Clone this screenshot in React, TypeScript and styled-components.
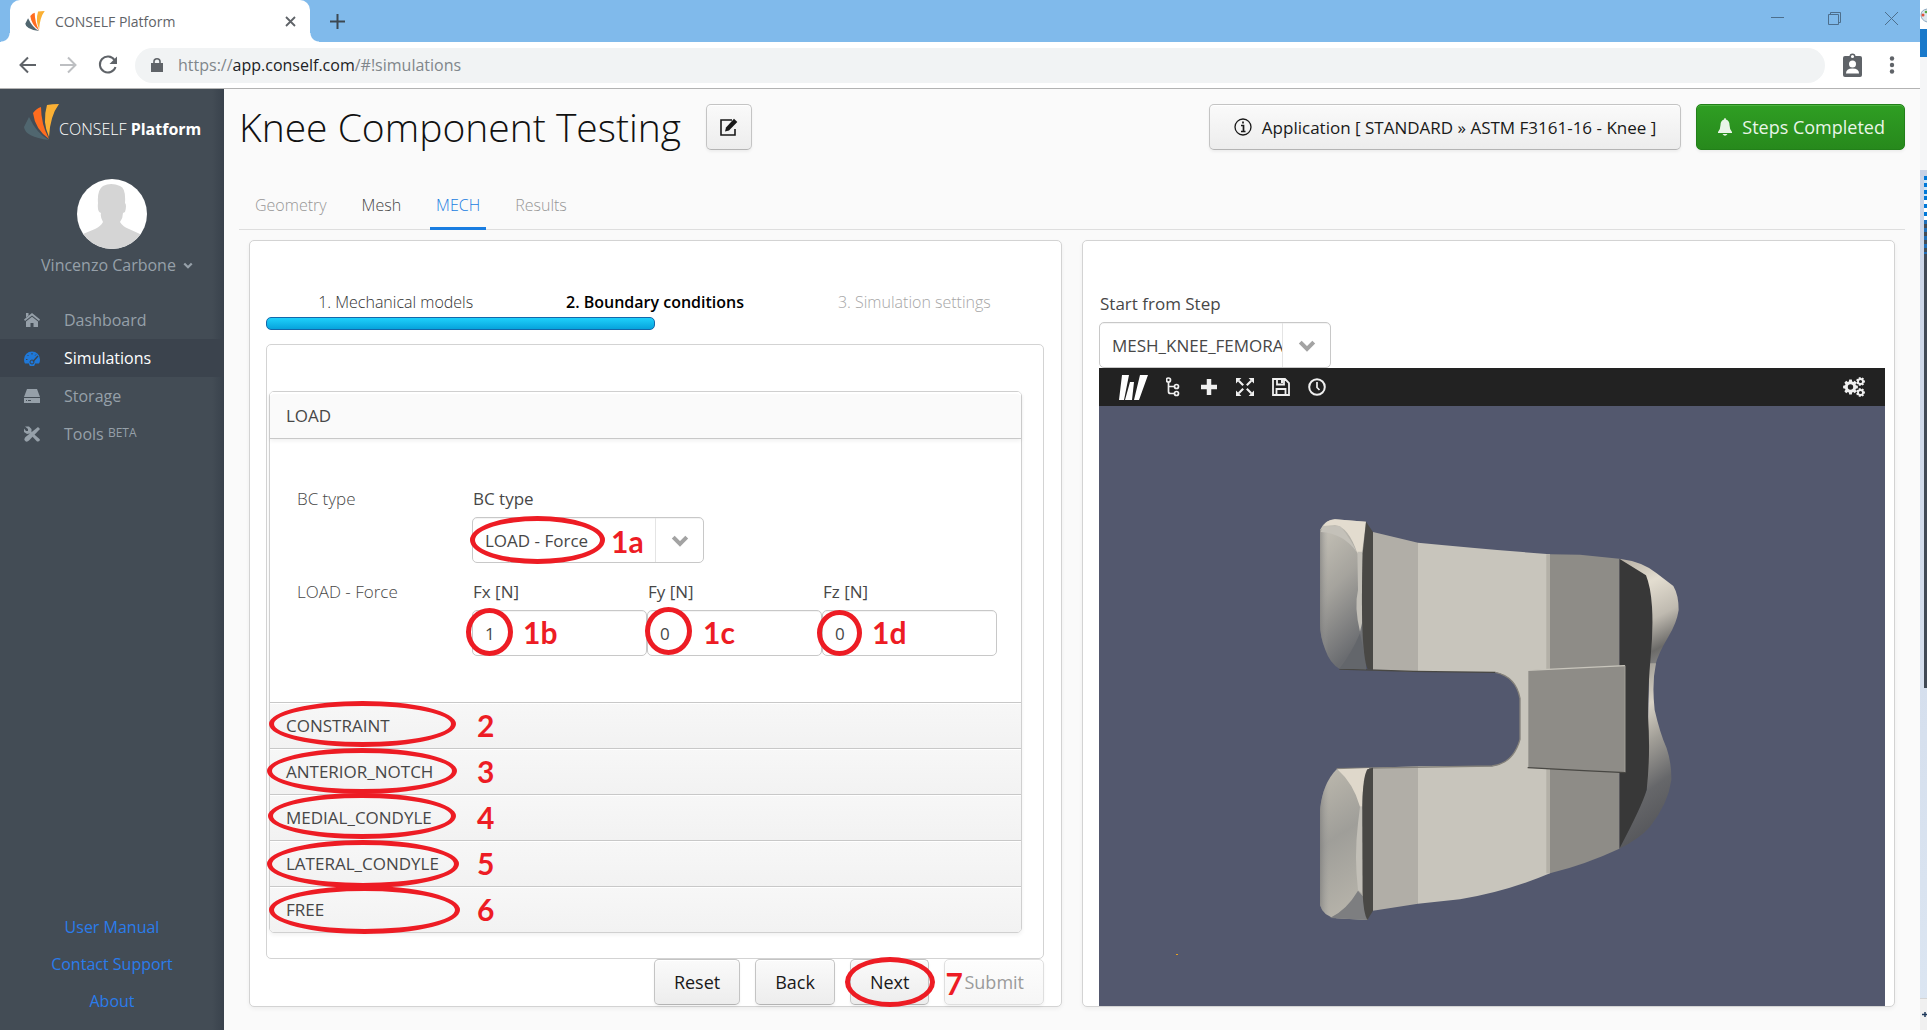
import React, { useState } from "react";
import styled, { createGlobalStyle, css } from "styled-components";

const sans = `"Open Sans", "Noto Sans", sans-serif`;
const red = "#ed1c24";

const GlobalStyle = createGlobalStyle`
  *, *::before, *::after { box-sizing: border-box; }
  body { margin: 0; background: #fafafa; font-family: ${sans}; font-size: 17px; color: #474747; }
  button, input, select { font-family: inherit; font-size: inherit; color: inherit; margin: 0; }
  h1, p, ul { margin: 0; padding: 0; font-weight: inherit; }
`;

/* ---------- window frame ---------- */
const Screen = styled.div`
  display: flex;
  min-height: 100vh;
`;
const Browser = styled.div`
  flex: 1;
  min-width: 0;
  display: flex;
  flex-direction: column;
`;
const TitleBar = styled.div`
  display: flex;
  height: 42px;
  padding-left: 10px;
  background: #80baeb;
`;
const BrowserTab = styled.div`
  position: relative;
  display: flex;
  align-items: center;
  width: 300px;
  padding: 0 14px 0 15px;
  border-radius: 10px 10px 0 0;
  background: #fff;
  font-size: 14px;
  color: #5f6368;
  &::before, &::after {
    content: "";
    position: absolute;
    bottom: 0;
    width: 9px;
    height: 9px;
  }
  &::before { right: 100%; background: radial-gradient(circle at 0 0, transparent 8px, #fff 9px); }
  &::after { left: 100%; background: radial-gradient(circle at 100% 0, transparent 8px, #fff 9px); }
`;
const TabTitle = styled.span`
  flex: 1;
  margin-left: 10px;
`;
const IconButton = styled.button`
  display: flex;
  align-items: center;
  justify-content: center;
  padding: 0;
  border: 0;
  background: none;
  svg { display: block; }
`;
const NewTab = styled(IconButton)`
  width: 34px;
  margin: 0 auto 0 10px;
`;
const WindowButton = styled(IconButton)`
  width: 57px;
  height: 37px;
`;
const AddressBar = styled.div`
  display: flex;
  align-items: center;
  height: 47px;
  padding: 0 18px;
  border-bottom: 1px solid #b3b3b3;
  background: #fff;
`;
const NavButtons = styled.div`
  display: flex;
  gap: 20px;
  width: 117px;
`;
const Omnibox = styled.div`
  display: flex;
  align-items: center;
  flex: 1;
  height: 35px;
  margin-right: 18px;
  padding-left: 16px;
  border-radius: 18px;
  background: #f1f3f4;
  font-size: 16px;
  color: #80868b;
`;
const Url = styled.span`
  margin-left: 15px;
  b { font-weight: 400; color: #202124; }
`;
const Body = styled.div`
  flex: 1;
  display: flex;
`;

/* ---------- sliver of the window behind ---------- */
const Backdrop = styled.div`
  display: flex;
  flex-direction: column;
  width: 7px;
  background: linear-gradient(#c7d1e4, #dce6f2);
  overflow: hidden;
`;
const Slice = styled.div<{ $h: number; $bg: string; $inset?: boolean }>`
  flex: none;
  height: ${(p) => p.$h}px;
  margin-left: ${(p) => (p.$inset ? 4 : 0)}px;
  background: ${(p) => p.$bg};
  svg { display: block; }
`;
const StatusSlice = styled.div`
  display: flex;
  align-items: center;
  height: 32px;
  margin-top: auto;
  border-top: 1px solid #d5d5d5;
  background: #f0f0f0;
`;

/* ---------- sidebar ---------- */
const Sidebar = styled.aside`
  display: flex;
  flex-direction: column;
  width: 224px;
  background: linear-gradient(to left, #39424c, transparent 12px), #434c55;
  font-size: 16px;
  color: #96a0a9;
`;
const Brand = styled.div`
  display: flex;
  height: 90px;
  padding: 15px 0 0 24px;
  color: #fff;
  font-weight: 300;
  span { padding-top: 13px; line-height: 24px; }
  b { font-weight: 700; }
`;
const Profile = styled.button`
  display: flex;
  flex-direction: column;
  align-items: center;
  gap: 4px;
  padding: 0;
  border: 0;
  background: none;
  line-height: 24px;
  span { display: flex; align-items: center; gap: 7px; padding-left: 10px; }
`;
const Menu = styled.nav`
  display: flex;
  flex-direction: column;
  margin-top: 24px;
`;
const MenuItem = styled.a<{ $active?: boolean }>`
  display: flex;
  align-items: center;
  gap: 24px;
  height: 38px;
  padding-left: 24px;
  color: inherit;
  text-decoration: none;
  ${(p) =>
    p.$active &&
    css`
      background: #3b434d;
      color: #fff;
      svg { color: #1f78d8; }
    `}
  sup { font-size: 12px; line-height: 1; vertical-align: 3px; }
`;
const HelpLinks = styled.div`
  display: flex;
  flex-direction: column;
  align-items: center;
  gap: 13px;
  margin-top: auto;
  padding-bottom: 17px;
  line-height: 24px;
  a { color: #2a7cec; text-decoration: none; }
`;

/* ---------- main area ---------- */
const Main = styled.main`
  flex: 1;
  min-width: 0;
  display: flex;
  flex-direction: column;
  padding: 15px 15px 23px;
`;
const Header = styled.header`
  display: flex;
  align-items: center;
  gap: 15px;
  height: 46px;
`;
const Title = styled.h1`
  margin-right: 10px;
  font-size: 39px;
  line-height: 46px;
  font-weight: 300;
  color: #111;
`;
const Button = styled.button<{ $kind?: "primary" }>`
  position: relative;
  display: flex;
  align-items: center;
  gap: 8px;
  height: 46px;
  padding: 0 19px;
  border: 1px solid #c4c4c4;
  border-bottom-color: #b4b4b4;
  border-radius: 5px;
  background: linear-gradient(#fafafa, #ededed);
  box-shadow: inset 0 1px 0 #fff, 0 2px 3px rgba(0, 0, 0, 0.05);
  font-size: 18px;
  color: #191919;
  white-space: nowrap;
  &:disabled { border-color: #dfdfdf; background: linear-gradient(#fdfdfd, #f6f6f6); color: #9b9b9b; }
  ${(p) =>
    p.$kind === "primary" &&
    css`
      border-color: #228019;
      background: linear-gradient(#2f9e23, #27891c);
      box-shadow: inset 0 1px 0 #4cb340, 0 2px 3px rgba(0, 0, 0, 0.05);
      color: #e9f5e8;
    `}
`;
const EditButton = styled(Button)`
  width: 46px;
  padding: 0;
  justify-content: center;
`;
const ApplicationButton = styled(Button)`
  margin-left: auto;
  padding: 0 24px;
  gap: 10px;
  font-size: 17px;
`;
const Tabs = styled.div`
  display: flex;
  gap: 23px;
  height: 49px;
  margin-top: 31px;
  padding-left: 10px;
  border-bottom: 1px solid #dedede;
`;
const Tab = styled.button<{ $state: "off" | "on" | "active" }>`
  height: 49px;
  padding: 2px 6px 0;
  border: 0;
  border-bottom: 3px solid ${(p) => (p.$state === "active" ? "#197de1" : "transparent")};
  background: none;
  font-size: 16px;
  font-weight: 300;
  color: ${(p) => ({ off: "#969696", on: "#464646", active: "#197de1" })[p.$state]};
`;
const Panels = styled.div`
  flex: 1;
  display: grid;
  grid-template-columns: 1fr 1fr;
  gap: 20px;
  margin-top: 10px;
  padding: 0 10px;
`;
const Panel = styled.section<{ $viewer?: boolean }>`
  display: flex;
  flex-direction: column;
  min-width: 0;
  padding: ${(p) => (p.$viewer ? "51px 9px 0 16px" : "49px 17px 0 16px")};
  border: 1px solid #d3d3d3;
  border-radius: 5px;
  background: #fff;
  box-shadow: 0 2px 4px rgba(0, 0, 0, 0.05);
`;

/* ---------- wizard ---------- */
const Steps = styled.ol`
  display: grid;
  grid-template-columns: repeat(3, 1fr);
  margin: 0;
  padding: 0;
  list-style: none;
  text-align: center;
  font-size: 16px;
  line-height: 24px;
`;
const Step = styled.li<{ $state: "done" | "current" | "next" }>`
  font-weight: ${(p) => (p.$state === "current" ? 600 : 300)};
  color: ${(p) => ({ done: "#333", current: "#000", next: "#a6a6a6" })[p.$state]};
`;
const Progress = styled.div`
  margin: 3px 0 14px;
`;
const ProgressFill = styled.div`
  width: 50%;
  height: 13px;
  border: 1px solid #1368ab;
  border-radius: 5px;
  background: linear-gradient(#1fd0fb, #07a3dc);
`;
const Frame = styled.div`
  padding: 46px 21px 25px 2px;
  border: 1px solid #d3d3d3;
  border-radius: 5px;
`;
const Accordion = styled.div`
  border: 1px solid #d0d0d0;
  border-radius: 5px;
  box-shadow: 0 2px 4px rgba(0, 0, 0, 0.06);
`;
const Fold = styled.button<{ $open?: boolean }>`
  position: relative;
  display: block;
  width: 100%;
  height: 46px;
  padding: 0 16px;
  border: 0;
  border-top: 1px solid #c8c8c8;
  background: linear-gradient(#f7f7f7, #f2f2f2);
  box-shadow: inset 0 1px 0 #fff;
  text-align: left;
  &:last-child { border-radius: 0 0 4px 4px; }
  ${(p) =>
    p.$open &&
    css`
      height: 47px;
      border-top: 0;
      border-bottom: 1px solid #c8c8c8;
      border-radius: 4px 4px 0 0;
      background: #fafafa;
      box-shadow: inset 0 2px 0 #fff, 0 2px 4px rgba(0, 0, 0, 0.06);
    `}
`;
const Form = styled.div`
  display: grid;
  row-gap: 17px;
  padding: 48px 24px 46px 27px;
`;
const FormRow = styled.div`
  display: grid;
  grid-template-columns: 175px 1fr;
  line-height: 24px;
`;
const RowName = styled.span`
  font-weight: 300;
`;
const Fields = styled.div`
  display: grid;
  grid-template-columns: repeat(3, 1fr);
`;
const Field = styled.div`
  position: relative;
  display: flex;
  flex-direction: column;
  gap: 6px;
  min-width: 0;
  line-height: 24px;
  label { padding-left: 1px; }
`;
const TextBox = styled.input`
  width: 100%;
  height: 46px;
  padding: 0 12px;
  border: 1px solid #c8c8c8;
  border-radius: 5px;
  background: #fff;
  box-shadow: inset 0 1px 0 #f4f4f4;
`;
const SelectBox = styled.div`
  position: relative;
  width: 232px;
  select {
    display: block;
    width: 100%;
    height: 46px;
    padding: 0 48px 0 12px;
    border: 1px solid #c8c8c8;
    border-radius: 5px;
    background: #fff;
    box-shadow: inset 0 1px 0 #f4f4f4;
    appearance: none;
  }
`;
const SelectArrow = styled.span`
  position: absolute;
  top: 1px;
  right: 1px;
  bottom: 1px;
  display: flex;
  align-items: center;
  justify-content: center;
  width: 48px;
  border-left: 1px solid #e4e4e4;
  color: #a3a3a3;
  pointer-events: none;
`;
const Actions = styled.div`
  display: flex;
  justify-content: flex-end;
  gap: 15px;
  padding-bottom: 1px;
`;

/* ---------- annotations drawn over the controls ---------- */
const Ring = styled.span<{ $x: number; $y: number; $w: number; $h: number }>`
  position: absolute;
  z-index: 2;
  left: ${(p) => p.$x}px;
  top: ${(p) => p.$y}px;
  width: ${(p) => p.$w}px;
  height: ${(p) => p.$h}px;
  border: 5px solid ${red};
  border-radius: 50%;
  pointer-events: none;
`;
const Note = styled.span<{ $x: number; $y: number }>`
  position: absolute;
  z-index: 2;
  left: ${(p) => p.$x}px;
  top: ${(p) => p.$y}px;
  font: 700 30px/32px Lato, "Open Sans", sans-serif;
  color: ${red};
  pointer-events: none;
`;

/* ---------- viewer ---------- */
const Viewer = styled.div`
  flex: 1;
  display: flex;
  flex-direction: column;
`;
const ViewerBar = styled.div`
  display: flex;
  align-items: center;
  gap: 18px;
  height: 38px;
  padding: 0 20px;
  background: #222;
  color: #f0f0f0;
  ${IconButton}:last-child { margin-left: auto; }
`;
const Canvas = styled.div`
  flex: 1;
  min-height: 600px;
  background: #53586e;
  svg { display: block; width: 100%; height: 100%; }
`;

/* ---------- drawings ---------- */
const Logo = ({ w, h }: { w: number; h: number }) => (
  <svg width={w} height={h} viewBox="0 0 35 36" aria-hidden="true">
    <path d="M5 13 L0 23 Q1 33 25 36 Q13 30 5 13Z" fill="#50666f" />
    <path d="M9 9 Q13 4 17 3 Q17 20 25 35 Q11 25 9 9Z" fill="#ff6c1f" />
    <path d="M23 1 Q28 0 35 0 Q26 12 25 33 Q18 18 23 1Z" fill="#fbb034" />
  </svg>
);
const Glyph = ({ w = 18, h = w, box = "0 0 18 18", children }: { w?: number; h?: number; box?: string; children: React.ReactNode }) => (
  <svg width={w} height={h} viewBox={box} fill="none" stroke="currentColor" strokeWidth="2" aria-hidden="true">
    {children}
  </svg>
);
const Chevron = ({ size }: { size: number }) => (
  <Glyph w={size} box="0 0 16 16">
    <path d="M2 5.5 L8 11.5 L14 5.5" strokeWidth="3.6" />
  </Glyph>
);
const Avatar = () => (
  <svg width="70" height="70" viewBox="0 0 70 70" aria-hidden="true">
    <clipPath id="face"><circle cx="35" cy="35" r="35" /></clipPath>
    <circle cx="35" cy="35" r="35" fill="#fff" />
    <path
      clipPath="url(#face)"
      fill="#d5d5d5"
      d="M21 24 Q20 11 26 7 Q34 3 43 7 Q49 9 48 24 Q50 26 48 33 L46 34 Q46 39 43 43 Q46 48 52 50 L63 55 L66 72 H4 L6 55 L18 50 Q24 47 26 43 Q23 38 24 34 Q20 33 21 24Z"
    />
  </svg>
);
const gearPath = (cx: number, cy: number, r: number, teeth: number) => {
  const pts: string[] = [];
  for (let i = 0; i < teeth; i++) {
    const a = (i / teeth) * Math.PI * 2;
    const s = Math.PI / teeth;
    [[-0.75, 0.76], [-0.45, 1], [0.45, 1], [0.75, 0.76]].forEach(([k, m]) =>
      pts.push(`${(cx + Math.cos(a + k * s) * r * m).toFixed(2)} ${(cy + Math.sin(a + k * s) * r * m).toFixed(2)}`)
    );
  }
  const q = r * 0.36;
  return `M${pts.join("L")}Z M${cx - q} ${cy}a${q} ${q} 0 1 0 ${2 * q} 0a${q} ${q} 0 1 0 ${-2 * q} 0Z`;
};

const KneeModel = () => (
  <svg viewBox="1099 406 786 600" role="img" aria-label="Knee component mesh">
    <defs>
      <linearGradient id="pad" x1="0" y1="0" x2="0.3" y2="1">
        <stop offset="0" stopColor="#c9c5ba" /><stop offset="0.5" stopColor="#a5a39d" /><stop offset="1" stopColor="#6a6c70" />
      </linearGradient>
      <linearGradient id="padLow" x1="0" y1="0" x2="0.2" y2="1">
        <stop offset="0" stopColor="#bdb9ae" /><stop offset="0.5" stopColor="#9f9e99" /><stop offset="1" stopColor="#b5b2a9" />
      </linearGradient>
      <linearGradient id="edge" x1="0" y1="0" x2="1" y2="0">
        <stop offset="0" stopColor="#777" stopOpacity="0.6" /><stop offset="0.3" stopColor="#999" stopOpacity="0" />
      </linearGradient>
      <linearGradient id="bumpTop" x1="0" y1="0" x2="0.25" y2="1">
        <stop offset="0" stopColor="#b5aea2" /><stop offset="0.3" stopColor="#e3ddd0" /><stop offset="0.6" stopColor="#bfbab0" /><stop offset="0.85" stopColor="#6b6a68" /><stop offset="1" stopColor="#888" />
      </linearGradient>
      <linearGradient id="bumpLow" x1="0.1" y1="0" x2="0.3" y2="1">
        <stop offset="0" stopColor="#8b8983" /><stop offset="0.3" stopColor="#d8d2c6" /><stop offset="0.5" stopColor="#a19e97" /><stop offset="0.75" stopColor="#66676a" /><stop offset="1" stopColor="#55565a" />
      </linearGradient>
    </defs>
    <g transform="translate(1280 490) scale(0.33333)">
      <path fill="url(#bumpTop)" d="M1018 206 Q1090 215 1130 250 L1180 288 Q1196 315 1196 360 Q1190 400 1165 440 Q1135 490 1126 525 L1105 570 L1100 300Z" />
      <path fill="url(#bumpLow)" d="M1108 520 L1128 520 Q1115 580 1124 660 Q1140 730 1160 775 Q1175 820 1174 870 Q1165 940 1110 1010 Q1080 1045 1018 1076 L1100 900Z" />
      <path fill="#383838" d="M1018 206 L1098 256 Q1112 290 1116 350 Q1120 420 1112 500 Q1103 600 1104 680 Q1112 790 1100 900 Q1085 950 1018 1076Z" />
      <path fill="#b1aea7" d="M279 126 L414 158 V545 L279 540Z M279 833 L414 829 V1241 L279 1262Z" />
      <path fill="#c8c5bc" d="M414 158 Q600 176 810 193 V1150 Q680 1205 540 1228 L414 1241 V829 H636 Q700 820 720 748 V625 Q708 560 646 546 H414Z" />
      <path fill="#8e8c87" d="M810 193 L900 194 L1018 206 V1076 Q920 1122 810 1150Z" />
      <path fill="#b3b0a7" d="M799 193h11V540h-11Z M799 836h11V1150h-11Z" />
      <path fill="#8e8c87" d="M743 541 L1035 526 V847 L743 833Z" />
      <path fill="none" stroke="#c8c5bc" strokeWidth="4" d="M743 833 V541 L1035 527" />
      <path fill="none" stroke="#a3a19a" strokeWidth="3" d="M1035 527 V847" />
      <path fill="none" stroke="#484743" strokeWidth="4" d="M743 833 L912 842 L1035 848 M178 537 L400 544 L646 547" />
      <path fill="none" stroke="#85827b" strokeWidth="4" d="M646 547 Q708 560 720 625 V748 Q700 820 636 828 L170 836" />
      <path fill="url(#pad)" d="M120 120 Q135 88 165 88 L258 95 V538 L178 536 Q150 520 136 480 Q120 440 120 400Z" />
      <path fill="url(#edge)" d="M120 120 Q150 100 200 150 V500 L178 536 Q120 480 120 400Z" />
      <path fill="#e3dccf" d="M165 88 L258 95 L246 190 H232 Q205 110 165 105 L130 108 Q140 90 165 88Z" />
      <path fill="#c4c1b9" d="M128 110 L180 108 Q215 150 230 186 Q190 130 122 126Z" />
      <path fill="#63666b" d="M240 430 L258 520 V538 L178 536 Q215 490 240 430Z" />
      <path fill="#c2bfb7" d="M232 185 H246 V400 L240 425 Q222 350 234 300Z" />
      <path fill="#494845" d="M258 95 L279 126 V540 L262 536 Q240 480 248 190Z" />
      <path fill="url(#padLow)" d="M120 960 Q128 880 170 838 L262 836 V1290 L170 1285 Q130 1280 120 1245Z" />
      <path fill="url(#edge)" d="M120 960 Q128 880 170 838 L210 900 V1210 L170 1285 Q130 1280 120 1245Z" />
      <path fill="#dfd8cb" d="M172 838 L268 834 Q246 880 246 950 H240 Q220 880 172 838Z" />
      <path fill="#7d7e80" d="M234 1202 L250 1220 L262 1290 L150 1284 Q200 1260 234 1202Z" />
      <path fill="#c2bfb7" d="M240 950 H246 V1210 L234 1200 Q222 1100 234 1000Z" />
      <path fill="#494845" d="M279 833 V1262 L262 1290 Q250 1270 248 1210 L247 950 Q248 860 262 838Z" />
    </g>
    <rect x="1176" y="954" width="2" height="1" fill="#e8a020" />
  </svg>
);

const menu = [
  {
    name: "Dashboard",
    icon: (
      <path d="M8 1 L16 7.5 L15 9 L8 3.5 L1 9 L0 7.5Z M2 1h2.5v2.5L2 5.5Z M8 4.8 L14 9.6 V15 H9.5 V11 H6.5 V15 H2 V9.6Z" />
    ),
  },
  {
    name: "Simulations",
    icon: (
      <>
        <path d="M8 1.5 A8 8 0 0 0 0 9.5 Q0 12 1 13.5 H5 A3 3 0 0 0 11 13.5 H15 Q16 12 16 9.5 A8 8 0 0 0 8 1.5Z" />
        <path d="M14 6 L9 11.5" stroke="#3b434d" strokeWidth="1.4" />
        <circle cx="8" cy="12" r="2" fill="none" stroke="#3b434d" />
        <path d="M2 9.5h1.5 M3.5 5l1 1 M8 3v1.5 M12 4.5l-.8 1" stroke="#3b434d" />
      </>
    ),
  },
  {
    name: "Storage",
    icon: <path fillRule="evenodd" d="M3 1H13L16 9H0Z M0 10H16V15H0Z M2 12v1h1v-1Z M4 12v1h3v-1Z" />,
  },
  {
    name: "Tools",
    beta: true,
    icon: (
      <>
        <path d="M14 1 L16 3 L5 14.5 Q3 16.500 1.200 15 Q-.4 13 1.500 11Z" />
        <path d="M1 0.500 L4 3 V5 H2 L0 2.500 V6 L3 8 L5.500 7.500 L13 15.500 Q15 16 16 14 L15.500 13 L7.500 6 V3 L5 .5Z" />
      </>
    ),
  },
];

const forces = [
  { name: "Fx [N]", value: "1", note: "1b", ring: [-6, 28, 47, 48], noteX: 51 },
  { name: "Fy [N]", value: "0", note: "1c", ring: [-2, 27, 47, 48], noteX: 56 },
  { name: "Fz [N]", value: "0", note: "1d", ring: [-5, 30, 45, 46], noteX: 50 },
];

const folds = [
  { name: "CONSTRAINT", ring: [-1, -2, 187, 46] },
  { name: "ANTERIOR_NOTCH", ring: [-3, -1, 190, 46] },
  { name: "MEDIAL_CONDYLE", ring: [-2, -2, 188, 46] },
  { name: "LATERAL_CONDYLE", ring: [-3, -1, 192, 48] },
  { name: "FREE", ring: [-1, -1, 191, 48] },
];

const RingAt = ({ at }: { at: number[] }) => <Ring $x={at[0]} $y={at[1]} $w={at[2]} $h={at[3]} />;

export default function App() {
  const [values, setValues] = useState(forces.map((f) => f.value));
  return (
    <>
      <GlobalStyle />
      <Screen>
        <Browser>
          <TitleBar>
            <BrowserTab>
              <Logo w={20} h={20} />
              <TabTitle>CONSELF Platform</TabTitle>
              <IconButton aria-label="Close tab">
                <Glyph w={11} box="0 0 11 11"><path d="M1 1 L10 10 M10 1 L1 10" strokeWidth="1.8" /></Glyph>
              </IconButton>
            </BrowserTab>
            <NewTab aria-label="New tab">
              <Glyph w={15} box="0 0 15 15"><path d="M7.5 0 V15 M0 7.5 H15" stroke="#3c4852" /></Glyph>
            </NewTab>
            <WindowButton aria-label="Minimize">
              <Glyph w={13} box="0 0 13 13"><path d="M0 5.5 H13" stroke="#4d6f8d" strokeWidth="1" /></Glyph>
            </WindowButton>
            <WindowButton aria-label="Restore">
              <Glyph w={13} box="0 0 13 13"><path d="M.5 2.500 H10.500 V12.500 H.5Z M2.500 2.500 V.5 H12.500 V10.500 H10.500" stroke="#4d6f8d" strokeWidth="1" /></Glyph>
            </WindowButton>
            <WindowButton aria-label="Close">
              <Glyph w={13} box="0 0 13 13"><path d="M0 0 L13 13 M13 0 L0 13" stroke="#4d6f8d" strokeWidth="1" /></Glyph>
            </WindowButton>
          </TitleBar>
          <AddressBar>
            <NavButtons>
              <IconButton aria-label="Back">
                <Glyph w={20} box="0 0 20 20"><path d="M18 10 H3 M10 2.500 L2.500 10 L10 17.500" stroke="#5f6368" /></Glyph>
              </IconButton>
              <IconButton aria-label="Forward">
                <Glyph w={20} box="0 0 20 20"><path d="M2 10 H17 M10 2.500 L17.500 10 L10 17.500" stroke="#bdbfc2" /></Glyph>
              </IconButton>
              <IconButton aria-label="Reload">
                <Glyph w={20} box="0 0 20 20">
                  <path d="M16.500 5 A8 8 0 1 0 17.500 12" stroke="#5f6368" />
                  <path d="M19 1.500 V9 H11.500Z" fill="#5f6368" stroke="none" />
                </Glyph>
              </IconButton>
            </NavButtons>
            <Omnibox>
              <Glyph w={12} h={14} box="0 0 12 14">
                <path d="M0 5 H12 V14 H0Z" fill="#5f6368" stroke="none" />
                <path d="M3 6 V3.500 A3 2.700 0 0 1 9 3.500 V6" stroke="#5f6368" strokeWidth="1.6" />
              </Glyph>
              <Url>https://<b>app.conself.com</b>/#!simulations</Url>
            </Omnibox>
            <IconButton aria-label="Account">
              <Glyph w={19} h={24} box="0 0 19 24">
                <rect y="3" width="19" height="21" rx="2" fill="#5f6368" stroke="none" />
                <circle cx="9.5" cy="3.500" r="2.300" fill="#fff" stroke="#5f6368" strokeWidth="1.500" />
                <circle cx="9.5" cy="11" r="3.500" fill="#fff" stroke="none" />
                <path d="M3 20.500 Q3 15.500 9.500 15.500 Q16 15.500 16 20.500Z" fill="#fff" stroke="none" />
              </Glyph>
            </IconButton>
            <IconButton aria-label="Menu">
              <Glyph w={40} h={18} box="-18 0 40 18">
                <g fill="#5f6368" stroke="none"><circle cx="12" cy="2.500" r="2.200" /><circle cx="12" cy="9" r="2.200" /><circle cx="12" cy="15.500" r="2.200" /></g>
              </Glyph>
            </IconButton>
          </AddressBar>
          <Body>
            <Sidebar>
              <Brand>
                <Logo w={35} h={36} />
                <span>CONSELF <b>Platform</b></span>
              </Brand>
              <Profile>
                <Avatar />
                <span>Vincenzo Carbone <Chevron size={10} /></span>
              </Profile>
              <Menu>
                {menu.map((m) => (
                  <MenuItem key={m.name} href={`#!${m.name.toLowerCase()}`} $active={m.name === "Simulations"}>
                    <svg width="16" height="16" viewBox="0 0 16 16" fill="currentColor" aria-hidden="true">{m.icon}</svg>
                    <span>{m.name}{m.beta && <> <sup>BETA</sup></>}</span>
                  </MenuItem>
                ))}
              </Menu>
              <HelpLinks>
                <a href="#manual">User Manual</a>
                <a href="#support">Contact Support</a>
                <a href="#about">About</a>
              </HelpLinks>
            </Sidebar>
            <Main>
              <Header>
                <Title>Knee Component Testing</Title>
                <EditButton aria-label="Rename">
                  <Glyph w={18} box="0 0 18 18">
                    <path d="M12 2 H1 V17 H15 V11" strokeWidth="1.6" />
                    <path d="M5 13.500 L6 9.500 L14 .8 L17.300 4 L9 12.500Z" fill="currentColor" stroke="none" />
                  </Glyph>
                </EditButton>
                <ApplicationButton>
                  <Glyph w={18}>
                    <circle cx="9" cy="9" r="8" strokeWidth="1.300" />
                    <path d="M9 3.500 V5.500 M7 7.500 H9.500 V13.500 M7 13.500 H11.500" strokeWidth="1.700" />
                  </Glyph>
                  Application [ STANDARD » ASTM F3161-16 - Knee ]
                </ApplicationButton>
                <Button $kind="primary">
                  <Glyph w={18}>
                    <path d="M9 0 Q10 0 10 1.500 Q13.500 2.500 13.500 7 Q13.500 11 16 14 V15 H2 V14 Q4.500 11 4.500 7 Q4.500 2.500 8 1.500 Q8 0 9 0Z M6.500 16 H11.500 Q9 19.500 6.500 16Z" fill="currentColor" stroke="none" />
                  </Glyph>
                  Steps Completed
                </Button>
              </Header>
              <Tabs role="tablist">
                <Tab role="tab" $state="off">Geometry</Tab>
                <Tab role="tab" $state="on">Mesh</Tab>
                <Tab role="tab" aria-selected $state="active">MECH</Tab>
                <Tab role="tab" $state="off">Results</Tab>
              </Tabs>
              <Panels>
                <Panel>
                  <Steps>
                    <Step $state="done">1. Mechanical models</Step>
                    <Step $state="current">2. Boundary conditions</Step>
                    <Step $state="next">3. Simulation settings</Step>
                  </Steps>
                  <Progress><ProgressFill /></Progress>
                  <Frame>
                    <Accordion>
                      <Fold $open aria-expanded>LOAD</Fold>
                      <Form>
                        <FormRow>
                          <RowName>BC type</RowName>
                          <Field>
                            <label htmlFor="bc">BC type</label>
                            <SelectBox>
                              <select id="bc"><option>LOAD - Force</option></select>
                              <SelectArrow><Chevron size={18} /></SelectArrow>
                            </SelectBox>
                            <Ring $x={-2} $y={29} $w={135} $h={48} />
                            <Note $x={139} $y={38}>1a</Note>
                          </Field>
                        </FormRow>
                        <FormRow>
                          <RowName>LOAD - Force</RowName>
                          <Fields>
                            {forces.map((f, i) => (
                              <Field key={f.name}>
                                <label htmlFor={f.note}>{f.name}</label>
                                <TextBox
                                  id={f.note}
                                  value={values[i]}
                                  onChange={(e) => setValues(values.map((v, j) => (j === i ? e.target.value : v)))}
                                />
                                <RingAt at={f.ring} />
                                <Note $x={f.noteX} $y={36}>{f.note}</Note>
                              </Field>
                            ))}
                          </Fields>
                        </FormRow>
                      </Form>
                      {folds.map((f, i) => (
                        <Fold key={f.name}>
                          {f.name}
                          <RingAt at={f.ring} />
                          <Note $x={207} $y={6}>{i + 2}</Note>
                        </Fold>
                      ))}
                    </Accordion>
                  </Frame>
                  <Actions>
                    <Button>Reset</Button>
                    <Button>Back</Button>
                    <Button>Next<Ring $x={-6} $y={-3} $w={90} $h={50} /></Button>
                    <Button disabled>Submit<Note $x={0} $y={7}>7</Note></Button>
                  </Actions>
                </Panel>
                <Panel $viewer>
                  <Field>
                    <label htmlFor="step">Start from Step</label>
                    <SelectBox>
                      <select id="step"><option>MESH_KNEE_FEMORAL</option></select>
                      <SelectArrow><Chevron size={18} /></SelectArrow>
                    </SelectBox>
                  </Field>
                  <Viewer>
                    <ViewerBar>
                      <IconButton aria-label="ParaViewWeb">
                        <Glyph w={29} h={25} box="0 0 29 25">
                          <path d="M0 25 L3 0 H10 L5 25Z M6 25 L11 7 H15 L13 25Z M15 25 L21 0 H29 L20 25Z" fill="#fff" stroke="none" />
                        </Glyph>
                      </IconButton>
                      <IconButton aria-label="Pipeline">
                        <Glyph w={16} h={20} box="2 0 16 20">
                          <g strokeWidth="1.700"><circle cx="4.500" cy="3" r="2" /><circle cx="12.500" cy="9.500" r="2" /><circle cx="12.500" cy="16.500" r="2" /><path d="M4.500 5 V14.500 Q4.500 16.500 6.500 16.500 H10.500 M4.500 9.500 H10.500" /></g>
                        </Glyph>
                      </IconButton>
                      <IconButton aria-label="Add">
                        <Glyph><path d="M9 1 V17 M1 9 H17" strokeWidth="4.500" /></Glyph>
                      </IconButton>
                      <IconButton aria-label="Fit view">
                        <Glyph box="0 0 20 20">
                          <path d="M3 3 L8 8 M17 3 L12 8 M3 17 L8 12 M17 17 L12 12" strokeWidth="2.400" />
                          <path d="M0 0H6L0 6Z M20 0H14L20 6Z M0 20H6L0 14Z M20 20H14L20 14Z" fill="currentColor" stroke="none" />
                        </Glyph>
                      </IconButton>
                      <IconButton aria-label="Save">
                        <Glyph><path d="M1 1 H13 L17 5 V17 H1Z M5 1 V6.500 H12 V1 M4.500 17 V11 H13.500 V17" strokeWidth="1.800" /><path d="M9 1h2v4h-2z" fill="currentColor" stroke="none" /></Glyph>
                      </IconButton>
                      <IconButton aria-label="Time">
                        <Glyph><circle cx="9" cy="9" r="7.800" /><path d="M9 4 V9.500 L11.500 12" strokeWidth="1.700" /></Glyph>
                      </IconButton>
                      <IconButton aria-label="Settings">
                        <svg width="22" height="20" viewBox="0 0 22 20" fill="currentColor" fillRule="evenodd" aria-hidden="true">
                          <path d={gearPath(7.5, 10, 7.5, 8)} />
                          <path d={gearPath(17.5, 4.5, 4.5, 7)} />
                          <path d={gearPath(17.5, 15.5, 4.5, 7)} />
                        </svg>
                      </IconButton>
                    </ViewerBar>
                    <Canvas><KneeModel /></Canvas>
                  </Viewer>
                </Panel>
              </Panels>
            </Main>
          </Body>
        </Browser>
        <Backdrop>
          <Slice $h={29} $bg="#fff">
            <svg width="7" height="29" viewBox="0 0 7 29" aria-hidden="true">
              <path d="M7 9 Q1 10 1 15 Q1 20 7 22" fill="#dbe6ee" stroke="#8aa6bd" />
              <circle cx="3" cy="15" r="1.500" fill="#e0503a" /><circle cx="6" cy="12" r="1.300" fill="#58a843" />
            </svg>
          </Slice>
          <Slice $h={28} $bg="#1979ca" />
          <Slice $h={113} $bg="#f5f6f7" />
          <Slice $h={6} $bg="#c7d1e4" />
          <Slice $h={20} $bg="repeating-linear-gradient(#0078d7 0 4px, #cfe6f8 4px 7px)" $inset />
          <Slice $h={24} $bg="repeating-linear-gradient(#0078d7 0 4px, #fff 4px 8px)" $inset />
          <Slice $h={34} $bg="repeating-linear-gradient(#1f6fb8 0 4px, #434c55 4px 8px)" $inset />
          <Slice $h={434} $bg="#414a55" $inset />
          <StatusSlice>
            <svg width="7" height="7" viewBox="0 0 7 7" aria-hidden="true"><path d="M7 3.500 H2 M5 1 V6" stroke="#1e395b" strokeWidth="1.500" /></svg>
          </StatusSlice>
        </Backdrop>
      </Screen>
    </>
  );
}
